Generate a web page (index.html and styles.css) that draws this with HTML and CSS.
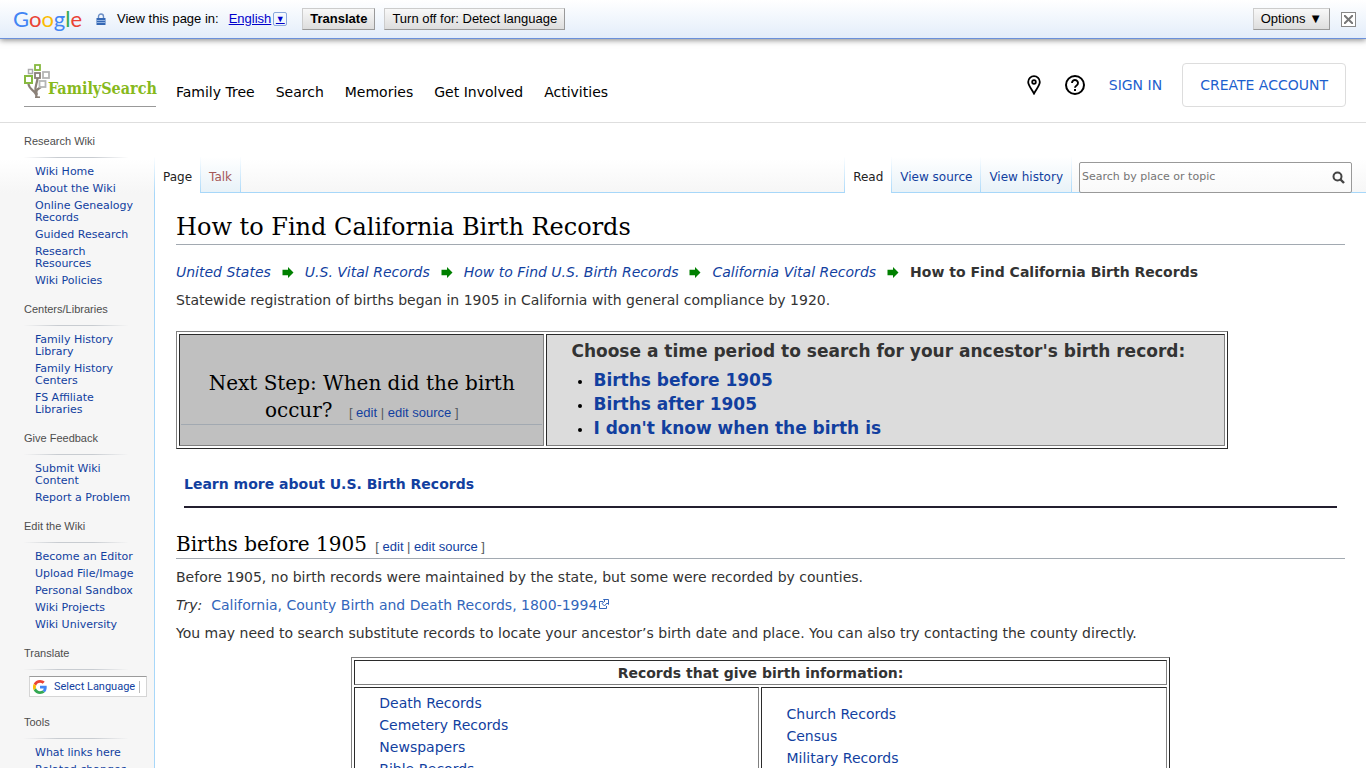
FILE: index.html
```html
<!DOCTYPE html>
<html lang="en">
	<head>
		<meta charset="UTF-8">
		<title>How to Find California Birth Records</title>
		<link rel="stylesheet" href="styles.css">
	</head>
	<body>
		<div class="translate_bar">
			<span class="google" aria-label="Google"><span class="g-blue">G</span><span class="g-red">o</span><span class="g-yellow">o</span><span class="g-blue">g</span><span class="g-green">l</span><span class="g-red">e</span></span>
			<svg class="lock" width="10" height="12" viewBox="0 0 10 12">
				<path d="M2.5 6V3.5a2.5 2.5 0 0 1 5 0V6" fill="none" stroke="#6d8fc5" stroke-width="1.4"/>
				<rect x="0.5" y="5" width="9" height="7" fill="#3568b5"/>
				<path d="M1 7.5h8M1 9.5h8" stroke="#8fb0e0"/>
			</svg>
			<span>View this page in:</span>
			<a href="#" class="lang">English<span class="lang_arrow">▼</span></a>
			<button class="bar_button bar_button--bold">Translate</button>
			<button class="bar_button">Turn off for: Detect language</button>
			<button class="bar_button bar_button--options">Options ▼</button>
			<button class="bar_close" aria-label="Close">
				<svg width="9" height="9" viewBox="0 0 9 9"><path d="M0 0l9 9M9 0l-9 9" stroke="#777" stroke-width="2"/></svg>
			</button>
		</div>

		<header class="header">
			<a href="#" class="logo">
				<svg class="logo_tree" width="26" height="34" viewBox="0 0 26 34" fill="none">
					<path d="M12.5 33C13 27 5 26 4.500 20M13 31C11 26 14 25 17 23M11.500 28C10.500 22 13.500 19 13.500 14" stroke="#8b8178" stroke-width="2.200"/>
					<path d="M11 33.200h5" stroke="#8b8178" stroke-width="1.600"/>
					<rect x="11" y="1" width="5" height="5" stroke="#87b940" stroke-width="1.800"/>
					<rect x="4.500" y="5.500" width="4" height="4" stroke="#aaa" stroke-width="1.500"/>
					<rect x="11" y="9" width="5" height="5" stroke="#8b8178" stroke-width="1.800"/>
					<rect x="19" y="8" width="6" height="6" stroke="#b5b5b5" stroke-width="1.800"/>
					<rect x="1" y="12" width="7" height="7" stroke="#87b940" stroke-width="2"/>
					<rect x="15.500" y="17" width="6" height="6" stroke="#b5b5b5" stroke-width="1.800"/>
				</svg>
				<span class="logo_text">FamilySearch</span>
			</a>
			<nav class="nav">
				<a href="#">Family Tree</a>
				<a href="#">Search</a>
				<a href="#">Memories</a>
				<a href="#">Get Involved</a>
				<a href="#">Activities</a>
			</nav>
			<div class="account">
				<a href="#" aria-label="Find a location">
					<svg width="14" height="20" viewBox="0 0 14 20" fill="none" stroke="#000"><path d="M7 18.500C5 14.500 1.200 10.500 1.200 7a5.800 5.800 0 0 1 11.600 0c0 3.500-3.800 7.500-5.800 11.500z" stroke-width="1.800"/><circle cx="7" cy="7" r="1.800" stroke-width="1.800"/></svg>
				</a>
				<a href="#" aria-label="Help">
					<svg width="20" height="20" viewBox="0 0 20 20" fill="none" stroke="#000"><circle cx="10" cy="10" r="9" stroke-width="2"/><path d="M7 8a3 3 0 1 1 4.600 2.500C10.500 11.200 10 11.700 10 12.700" stroke-width="1.900"/><path d="M10 14v2" stroke-width="2"/></svg>
				</a>
				<a href="#" class="sign_in">SIGN IN</a>
				<a href="#" class="create">CREATE ACCOUNT</a>
			</div>
		</header>

		<div class="page">
			<aside class="sidebar">
				<section class="portal">
					<h3>Research Wiki</h3>
					<ul>
						<li><a href="#">Wiki Home</a></li>
						<li><a href="#">About the Wiki</a></li>
						<li><a href="#">Online Genealogy Records</a></li>
						<li><a href="#">Guided Research</a></li>
						<li><a href="#">Research<br>Resources</a></li>
						<li><a href="#">Wiki Policies</a></li>
					</ul>
				</section>
				<section class="portal">
					<h3>Centers/Libraries</h3>
					<ul>
						<li><a href="#">Family History<br>Library</a></li>
						<li><a href="#">Family History<br>Centers</a></li>
						<li><a href="#">FS Affiliate<br>Libraries</a></li>
					</ul>
				</section>
				<section class="portal">
					<h3>Give Feedback</h3>
					<ul>
						<li><a href="#">Submit Wiki<br>Content</a></li>
						<li><a href="#">Report a Problem</a></li>
					</ul>
				</section>
				<section class="portal">
					<h3>Edit the Wiki</h3>
					<ul>
						<li><a href="#">Become an Editor</a></li>
						<li><a href="#">Upload File/Image</a></li>
						<li><a href="#">Personal Sandbox</a></li>
						<li><a href="#">Wiki Projects</a></li>
						<li><a href="#">Wiki University</a></li>
					</ul>
				</section>
				<section class="portal">
					<h3>Translate</h3>
					<a href="#" class="select_lang">
						<svg width="14" height="14" viewBox="0 0 48 48">
							<path fill="#ea4335" d="M24 9.500c3.500 0 6.700 1.200 9.200 3.600l6.900-6.900C35.900 2.400 30.500 0 24 0 14.600 0 6.500 5.400 2.600 13.200l8 6.200C12.400 13.700 17.700 9.500 24 9.500z"/>
							<path fill="#4285f4" d="M47 24.500c0-1.600-.2-3.100-.4-4.500H24v9h12.900c-.6 3-2.200 5.500-4.700 7.200l7.700 6C44.400 38 47 31.800 47 24.500z"/>
							<path fill="#fbbc05" d="M10.500 28.600a14.500 14.500 0 0 1 0-9.200l-8-6.200a24 24 0 0 0 0 21.600z"/>
							<path fill="#34a853" d="M24 48c6.500 0 11.900-2.100 15.900-5.800l-7.700-6c-2.100 1.500-4.900 2.300-8.200 2.300-6.300 0-11.600-4.200-13.500-9.900l-8 6.200C6.500 42.600 14.600 48 24 48z"/>
						</svg>
						<span class="select_lang_text">Select Language</span>
					</a>
				</section>
				<section class="portal">
					<h3>Tools</h3>
					<ul>
						<li><a href="#">What links here</a></li>
						<li><a href="#">Related changes</a></li>
					</ul>
				</section>
			</aside>

			<div class="main">
				<div class="tabs">
					<a href="#" class="tab tab--selected tab--first">Page</a>
					<a href="#" class="tab tab--new">Talk</a>
					<a href="#" class="tab tab--selected tab--views">Read</a>
					<a href="#" class="tab">View source</a>
					<a href="#" class="tab">View history</a>
					<form class="search">
						<input type="search" placeholder="Search by place or topic" aria-label="Search by place or topic">
						<button type="button" aria-label="Go">
							<svg width="13" height="13" viewBox="0 0 13 13" fill="none" stroke="#444"><circle cx="5.500" cy="5.500" r="4" stroke-width="2"/><path d="M8.500 8.500l3.500 3.500" stroke-width="2.400"/></svg>
						</button>
					</form>
				</div>

				<main class="content">
					<h1>How to Find California Birth Records</h1>
					<div class="crumbs">
						<a href="#">United States</a>
						<svg class="arrow" viewBox="0 0 12 12"><path d="M0 3h6V0l6 6-6 6V9H0z"/></svg>
						<a href="#">U.S. Vital Records</a>
						<svg class="arrow" viewBox="0 0 12 12"><path d="M0 3h6V0l6 6-6 6V9H0z"/></svg>
						<a href="#">How to Find U.S. Birth Records</a>
						<svg class="arrow" viewBox="0 0 12 12"><path d="M0 3h6V0l6 6-6 6V9H0z"/></svg>
						<a href="#">California Vital Records</a>
						<svg class="arrow" viewBox="0 0 12 12"><path d="M0 3h6V0l6 6-6 6V9H0z"/></svg>
						<b>How to Find California Birth Records</b>
					</div>
					<p>Statewide registration of births began in 1905 in California with general compliance by 1920.</p>

					<table class="next_step">
						<tr>
							<td class="question">
								<h2>Next Step: When did the birth<br>occur? <span class="edit">[ <a href="#">edit</a> | <a href="#">edit source</a> ]</span></h2>
							</td>
							<td class="choices">
								<b>Choose a time period to search for your ancestor's birth record:</b>
								<ul>
									<li><a href="#">Births before 1905</a></li>
									<li><a href="#">Births after 1905</a></li>
									<li><a href="#">I don't know when the birth is</a></li>
								</ul>
							</td>
						</tr>
					</table>

					<div class="learn_more"><a href="#">Learn more about U.S. Birth Records</a></div>

					<h2>Births before 1905 <span class="edit">[ <a href="#">edit</a> | <a href="#">edit source</a> ]</span></h2>
					<p>Before 1905, no birth records were maintained by the state, but some were recorded by counties.</p>
					<p><i>Try:</i>&nbsp; <a href="#" class="external">California, County Birth and Death Records, 1800-1994<svg width="12" height="12" viewBox="0 0 12 12" fill="none" stroke="#36b"><path d="M5 3.500H1.500v7h7V8"/><path d="M5.500 1.500h5v5L9 5 6.500 8 4 5.500 7 3z"/></svg></a></p>
					<p>You may need to search substitute records to locate your ancestor’s birth date and place. You can also try contacting the county directly.</p>

					<table class="records">
						<tr>
							<th colspan="2">Records that give birth information:</th>
						</tr>
						<tr>
							<td>
								<ul>
									<li><a href="#">Death Records</a></li>
									<li><a href="#">Cemetery Records</a></li>
									<li><a href="#">Newspapers</a></li>
									<li><a href="#">Bible Records</a></li>
								</ul>
							</td>
							<td>
								<ul>
									<li><a href="#">Church Records</a></li>
									<li><a href="#">Census</a></li>
									<li><a href="#">Military Records</a></li>
								</ul>
							</td>
						</tr>
					</table>
				</main>
			</div>
		</div>
	</body>
</html>
```
FILE: styles.css
```css
* {
	box-sizing: border-box;
}
html {
	height: 100%;
	overflow: hidden;
}
body {
	margin: 0;
	height: 100%;
	overflow: hidden;
	display: flex;
	flex-direction: column;
	background: #fff;
	color: #333;
	font: 14px/22px Verdana, "DejaVu Sans", sans-serif;
}
a {
	color: #123f9f;
	text-decoration: none;
}
ul {
	margin: 0;
	padding: 0;
	list-style: none;
}

/* google translate bar */
.translate_bar {
	flex: none;
	display: flex;
	align-items: center;
	height: 39px;
	padding: 0 10px 0 13px;
	border-bottom: 1px solid #6b90da;
	background: linear-gradient(#fff, #e3edfa);
	box-shadow: 0 1px 6px rgba(0, 0, 0, .5);
	color: #000;
	font: 13px/16px Arial, "Liberation Sans", sans-serif;
	position: relative;
}
.google {
	width: 83px;
	font: 22px/28px Lato, sans-serif;
}
.g-blue { color: #4285f4; }
.g-red { color: #ea4335; }
.g-yellow { color: #fbbc05; }
.g-green { color: #34a853; }
.lock {
	margin-right: 11px;
}
.lang {
	display: flex;
	align-items: center;
	margin: 0 15px 0 10px;
	color: #0000cc;
	text-decoration: underline;
}
.lang_arrow {
	display: inline-block;
	width: 14px;
	height: 14px;
	margin-left: 2px;
	border: 1px solid #8aa8dc;
	border-radius: 2px;
	font-size: 9px;
	line-height: 12px;
	text-align: center;
	text-decoration: none;
}
.bar_button {
	height: 22px;
	margin-right: 9px;
	padding: 0 7px;
	border: 1px solid;
	border-color: #ccc #999 #999 #ccc;
	background: linear-gradient(#f8f8f8, #ddd);
	color: #000;
	font: 13px/18px Arial, "Liberation Sans", sans-serif;
}
.bar_button--bold {
	font-weight: bold;
}
.bar_button--options {
	margin: 0 11px 0 auto;
}
.bar_close {
	display: flex;
	align-items: center;
	justify-content: center;
	width: 15px;
	height: 15px;
	padding: 0;
	border: 1px solid #888;
	background: #fff;
}

/* site header */
.header {
	flex: none;
	display: flex;
	align-items: center;
	height: 84px;
	padding: 0 20px 0 24px;
	border-bottom: 1px solid #dedede;
}
.logo {
	display: flex;
	align-items: flex-end;
	width: 132px;
	height: 43px;
	padding-bottom: 8px;
	margin: 9px 20px 0 0;
	border-bottom: 1px solid #999;
}
.logo_tree {
	flex: none;
}
.logo_text {
	margin-left: -2px;
	color: #87b91c;
	font: bold 16px/18px "DejaVu Serif Condensed", "DejaVu Serif", serif;
}
.nav {
	display: flex;
	gap: 21px;
	padding-top: 22px;
}
.nav a {
	color: #000;
}
.account {
	display: flex;
	align-items: center;
	gap: 24px;
	margin-left: auto;
	padding-top: 8px;
}
.account svg {
	display: block;
}
.sign_in,
.create {
	color: #1d5fce;
}
.create {
	padding: 10px 17px;
	margin-left: -4px;
	border: 1px solid #ddd;
	border-radius: 4px;
}

/* wiki page */
.page {
	flex: 1;
	min-height: 0;
	display: flex;
	background: linear-gradient(#fff 36px, #f6f6f6 70px);
}
.sidebar {
	flex: none;
	width: 154px;
	padding: 10px 8px 0 24px;
	font-size: 11px;
	line-height: 12px;
}
.portal {
	margin-bottom: 9px;
}
.portal h3 {
	margin: 0 18px 8px 0;
	padding-bottom: 8px;
	border-bottom: 1px solid;
	border-image: linear-gradient(to right, #f6f6f600, #c8ccd1 33%, #c8ccd1 66%, #f6f6f600) 1;
	color: #4d4d4d;
	font: 11px/16px Arial, "Liberation Sans", sans-serif;
}
.portal li {
	padding: 0 0 5px 11px;
}
.select_lang {
	display: flex;
	align-items: center;
	gap: 7px;
	width: 118px;
	height: 21px;
	margin: -2px 0 17px 5px;
	padding: 0 3px;
	border: 1px solid #d5d5d5;
	border-top-color: #9b9b9b;
	background: #fff;
	font: 11px/12px Verdana, Roboto, sans-serif;
	white-space: nowrap;
}
.select_lang_text {
	padding-right: 4px;
	border-right: 1px solid #bbb;
}
.main {
	flex: 1;
	min-width: 0;
	display: flex;
	flex-direction: column;
}
.tabs {
	flex: none;
	display: flex;
	align-items: flex-end;
	height: 70px;
	padding-right: 14px;
	font-size: 12px;
	background: linear-gradient(#a7d7f9, #a7d7f9) bottom / 100% 1px no-repeat;
}
.tab {
	height: 36px;
	padding: 9px 8px 0;
	border-right: 1px solid;
	border-image: linear-gradient(#fff, #a7d7f9) 1;
	background: linear-gradient(#fff, #e8f2f8) top / 100% 35px no-repeat;
}
.tab--selected {
	background: #fff;
	color: #222;
}
.tab--first,
.tab--views {
	border-left: 1px solid;
}
.tab--new {
	color: #a55858;
}
.tab--views {
	margin-left: auto;
}
.search {
	display: flex;
	align-items: center;
	width: 273px;
	height: 31px;
	margin-left: 7px;
	border: 1px solid #999;
	border-radius: 2px;
	background: linear-gradient(#fff, #f9f9f9);
}
.search input {
	flex: 1;
	min-width: 0;
	height: 100%;
	padding: 0 2px 2px;
	border: 0;
	outline: 0;
	background: none;
	font: 11px/16px Verdana, "DejaVu Sans", sans-serif;
}
.search input::placeholder {
	color: #757575;
}
.search button {
	display: flex;
	padding: 0 6px;
	border: 0;
	background: none;
}
.content {
	flex: 1;
	min-height: 0;
	padding: 19px 21px 0;
	border-left: 1px solid #a7d7f9;
	background: #fff;
}
h1,
h2 {
	margin: 0;
	border-bottom: 1px solid #a2a9b1;
	color: #000;
	font-family: "DejaVu Serif", serif;
	font-weight: normal;
}
h1 {
	padding-bottom: 2px;
	font-size: 24px;
	line-height: 30px;
}
h2 {
	font-size: 20px;
	line-height: 27px;
}
.edit {
	margin-left: 2px;
	color: #54595d;
	font: 13px/16px Arial, "Liberation Sans", sans-serif;
}
p {
	margin: 6px 0;
}
.crumbs {
	display: flex;
	align-items: center;
	padding-top: 16px;
}
.crumbs a {
	font-style: italic;
}
.arrow {
	width: 12px;
	height: 11px;
	margin: 0 11px;
	fill: #008000;
}

/* old style bevelled tables */
table {
	border: 1px solid;
	border-color: #808080 #2b2b2b #2b2b2b #808080;
	border-spacing: 2px;
}
td,
th {
	padding: 1px;
	border: 1px solid;
	border-color: #2b2b2b #808080 #808080 #2b2b2b;
}
.next_step {
	width: 90%;
	margin-top: 20px;
}
.question {
	width: 35%;
	padding-top: 16px;
	background: #c0c0c0;
	text-align: center;
}
.question .edit {
	margin-left: 10px;
}
.choices {
	padding: 4px 24px 5px;
	background: #dcdcdc;
	font-size: 17px;
	line-height: 24px;
	font-weight: bold;
}
.choices ul {
	margin-top: 5px;
	padding-left: 22px;
	list-style: disc;
}
.choices li::marker {
	color: #000;
	font-size: 14px;
}
.learn_more {
	margin: 24px 8px 0;
	padding-bottom: 11px;
	border-bottom: 2px solid #231f2f;
	font-weight: bold;
}
.learn_more + h2 {
	margin: 23px 0 7px;
}
.external {
	color: #36b;
}
.external svg {
	margin-left: 1px;
}
.records {
	width: 70%;
	margin: 13px auto 0;
}
.records th {
	padding-bottom: 0;
}
.records td {
	width: 50%;
	padding: 4px 24px;
}
```
